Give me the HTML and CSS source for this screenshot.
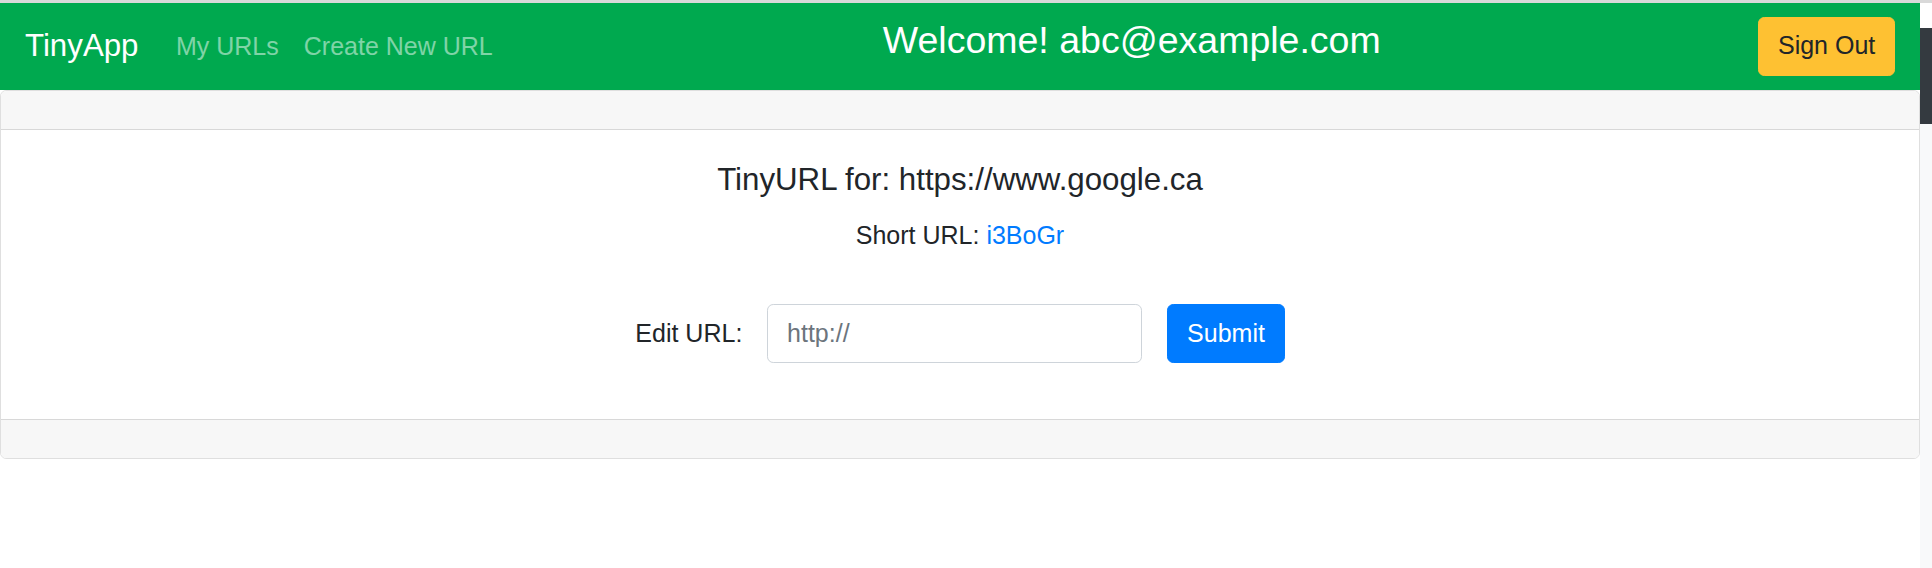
FILE: index.html
```html
<!DOCTYPE html>
<html lang="en">
<head>
<meta charset="utf-8">
<title>TinyApp</title>
<link rel="stylesheet" href="styles.css">
</head>
<body>
<div class="topline"></div>
<div class="page">
  <div class="main">
    <nav class="navbar">
      <a class="brand" href="#">TinyApp</a>
      <div class="collapse">
        <ul class="nav">
          <li><a class="nav-link" href="#">My URLs</a></li>
          <li><a class="nav-link" href="#">Create New URL</a></li>
        </ul>
        <h4 class="welcome">Welcome! abc@example.com</h4>
        <button class="btn btn-warning" type="button">Sign Out</button>
      </div>
    </nav>
    <div class="card">
      <div class="card-header"></div>
      <div class="card-body">
        <h5 class="card-title">TinyURL for: https://www.google.ca</h5>
        <p class="card-text">Short URL: <a class="link" href="#">i3BoGr</a></p>
        <form class="edit-form">
          <label class="edit-label" for="url">Edit URL:</label>
          <input class="form-control" id="url" type="text" placeholder="http://">
          <button class="btn btn-primary" type="button">Submit</button>
        </form>
      </div>
      <div class="card-footer"></div>
    </div>
  </div>
  <div class="rail">
    <div class="rail-top"></div>
    <div class="rail-thumb"></div>
    <div class="rail-track"></div>
  </div>
</div>
</body>
</html>
```

FILE: styles.css
```css
html { font-size: 25px; }
* { box-sizing: border-box; }
body {
  margin: 0;
  font-family: "Liberation Sans", Arial, sans-serif;
  font-size: 25px;
  line-height: 1.5;
  color: #212529;
  background: #fff;
  height: 568px;
  overflow: hidden;
}
.topline { height: 2.5px; background: #d9d9d9; }
.page { display: flex; height: 565.5px; }
.main { flex: 1; min-width: 0; }
.rail { width: 12px; display: flex; flex-direction: column; }
.rail-top { height: 25.5px; background: #fff; }
.rail-thumb { height: 96px; background: #343a40; }
.rail-track { flex: 1; background: #f8f9fa; }

.navbar {
  display: flex;
  align-items: center;
  background: #00a94f;
  padding: 12.5px 25px;
  height: 87.5px;
}
.brand {
  font-size: 31.25px;
  line-height: 1.5;
  padding: 7.8px 0;
  margin-right: 25px;
  color: #fff;
  text-decoration: none;
  white-space: nowrap;
}
.collapse { flex: 1; display: flex; align-items: center; }
.nav { list-style: none; margin: 0; padding: 0; display: flex; }
.nav-link {
  display: block;
  padding: 12.5px 12.5px;
  color: rgba(255,255,255,.5);
  text-decoration: none;
}
.welcome {
  margin: 0 auto 12.5px;
  font-size: 37.5px;
  font-weight: 400;
  line-height: 1.2;
  color: #fff;
}
.btn {
  font-family: inherit;
  font-size: 25px;
  line-height: 1.5;
  padding: 9.375px 18.75px;
  border: 1px solid transparent;
  border-radius: 6.25px;
  height: 59.4px;
}
.btn-warning { background: #fec132; border-color: #fec132; color: #212529; }
.btn-primary { background: #007bff; border-color: #007bff; color: #fff; }

.card {
  border: 1px solid rgba(0,0,0,.125);
  border-radius: 6.25px;
  overflow: hidden;
}
.card-header {
  height: 38.5px;
  background: #f7f7f7;
  border-bottom: 1px solid rgba(0,0,0,.125);
}
.card-body {
  padding: 31.25px;
  text-align: center;
}
.card-title {
  margin: 0 0 18.75px;
  font-size: 31.25px;
  font-weight: 400;
  line-height: 1.2;
}
.card-text { margin: 0 0 25px; }
.link { color: #007bff; text-decoration: none; }
.edit-form {
  display: flex;
  justify-content: center;
  align-items: center;
  gap: 25px;
  padding: 24.5px 0;
}
.edit-label { white-space: nowrap; }
.form-control {
  width: 375px;
  height: 59.4px;
  padding: 9.375px 18.75px;
  font-family: inherit;
  font-size: 25px;
  line-height: 1.5;
  color: #495057;
  border: 1px solid #ced4da;
  border-radius: 6.25px;
  background: #fff;
}
.form-control::placeholder { color: #6c757d; }
.card-footer {
  height: 38.5px;
  background: #f7f7f7;
  border-top: 1px solid rgba(0,0,0,.125);
}
```
